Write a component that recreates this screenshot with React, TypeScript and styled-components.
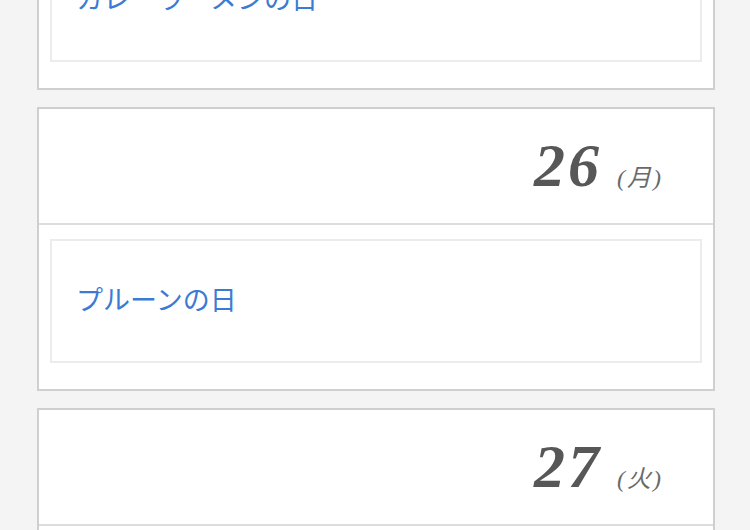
import styled, { createGlobalStyle } from 'styled-components';

const Global = createGlobalStyle`
  html, body {
    margin: 0;
    padding: 0;
    background: #f4f4f4;
    overflow: hidden;
  }
  body {
    font-family: "Noto Sans CJK JP", "Noto Sans", sans-serif;
  }
`;

const Page = styled.div`
  width: 750px;
  height: 530px;
  overflow: hidden;
`;

const List = styled.div`
  display: flex;
  flex-direction: column;
  gap: 17px;
  margin: -194px 35px 0 37px;
`;

const Card = styled.section`
  background: #fff;
  border: 2px solid #cfcfcf;
`;

const Head = styled.div`
  height: 116px;
  box-sizing: border-box;
  display: flex;
  align-items: baseline;
  justify-content: flex-end;
  padding: 25px 50px 0 0;
  border-bottom: 2px solid #dcdcdc;
`;

const Day = styled.span`
  font-family: "Liberation Serif", serif;
  font-style: italic;
  font-weight: bold;
  font-size: 62px;
  line-height: 1;
  color: #575757;
  letter-spacing: 3px;
`;

const Week = styled.span`
  font-family: "Liberation Serif", "Noto Sans CJK JP", serif;
  font-style: italic;
  font-size: 24px;
  line-height: 1;
  color: #6a6a6a;
  margin-left: 15px;
  letter-spacing: 2px;
`;

const Body = styled.div`
  padding: 14px 11px 26px;
`;

const Event = styled.div`
  border: 2px solid #ececec;
  height: 120px;
  box-sizing: border-box;
  height: 124px;
  display: flex;
  align-items: center;
  padding: 0 0 5px 24px;
`;

const EventLink = styled.a`
  font-family: "Noto Sans CJK JP", sans-serif;
  font-size: 27px;
  color: #3b7bd4;
  text-decoration: none;
`;

const days = [
  { day: '25', week: '日', event: 'カレーラーメンの日' },
  { day: '26', week: '月', event: 'プルーンの日' },
  { day: '27', week: '火', event: '' },
];

export default function App() {
  return (
    <Page>
      <Global />
      <List>
        {days.map((d) => (
          <Card key={d.day}>
            <Head>
              <Day>{d.day}</Day>
              <Week>({d.week})</Week>
            </Head>
            <Body>
              <Event>
                <EventLink href="#">{d.event}</EventLink>
              </Event>
            </Body>
          </Card>
        ))}
      </List>
    </Page>
  );
}
